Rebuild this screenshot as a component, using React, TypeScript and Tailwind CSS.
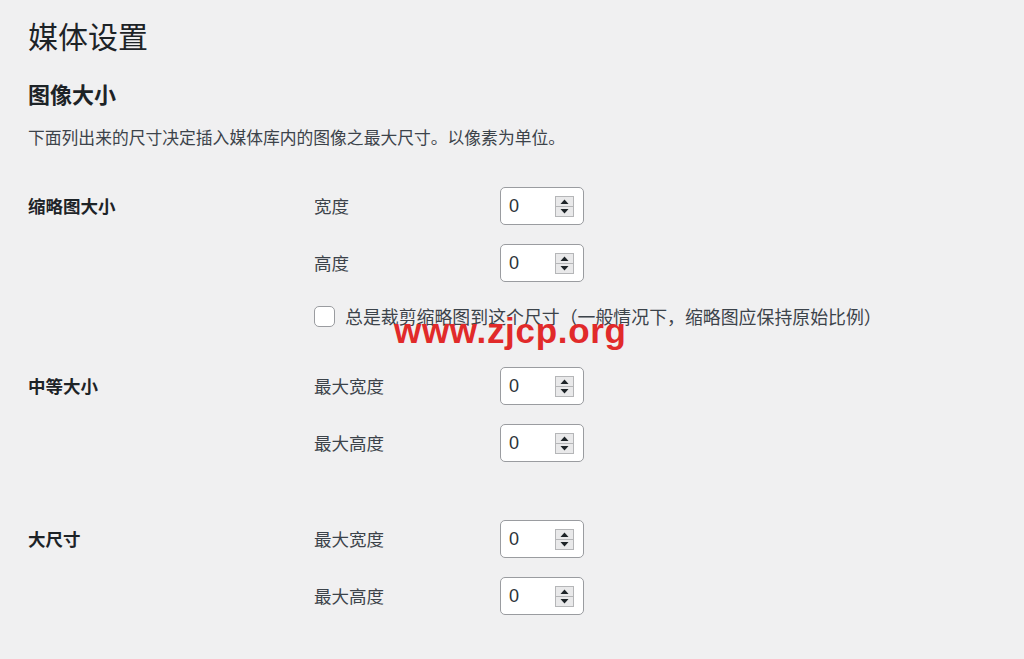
import React from 'react';

const FONT = '"Noto Sans CJK SC", "Liberation Sans", sans-serif';

const Spinner: React.FC = () => (
    <svg width="19" height="21" viewBox="0 0 19 21" className="shrink-0">
        <rect x="0.5" y="0.5" width="18" height="20" fill="#e9e9ea" stroke="#b5b6b8" />
        <line x1="1" y1="10.5" x2="18" y2="10.5" stroke="#b5b6b8" />
        <path d="M9.5 3.5 L13.5 8 L5.5 8 Z" fill="#1d2327" />
        <path d="M9.5 17.5 L13.5 13 L5.5 13 Z" fill="#1d2327" />
    </svg>
);

const NumberBox: React.FC<{ value: string }> = ({ value }) => (
    <div className="w-[84px] h-[38px] bg-white border border-[#9a9ca0] rounded-[5px] flex items-center pl-[8px] pr-[9px] justify-between">
        <span className="text-[18px] text-[#2c3338]" style={{ fontFamily: '"Liberation Sans", sans-serif' }}>{value}</span>
        <Spinner />
    </div>
);

const FieldRow: React.FC<{ label: string; className?: string }> = ({ label, className }) => (
    <div className={`flex items-center h-[38px] ${className ?? ''}`}>
        <span className="w-[186px] text-[17.5px] text-[#3c434a]">{label}</span>
        <NumberBox value="0" />
    </div>
);

const Section: React.FC<{ title: string; className?: string; children: React.ReactNode }> = ({ title, className, children }) => (
    <div className={`flex ${className ?? ''}`}>
        <div className="w-[286px] h-[38px] flex items-center text-[17.5px] font-bold text-[#1d2327]">{title}</div>
        <div className="flex flex-col">{children}</div>
    </div>
);

export default function App() {
    return (
        <div className="relative w-[1024px] h-[659px] overflow-hidden bg-[#f0f0f1] px-[28px]" style={{ fontFamily: FONT }}>
            <h1 className="pt-[15px] text-[30px] leading-[40px] font-normal text-[#1d2327]">媒体设置</h1>
            <h2 className="mt-[23px] text-[22px] leading-[30px] font-bold text-[#1d2327]">图像大小</h2>
            <p className="mt-[16px] text-[16.8px] leading-[26px] text-[#3c434a]">
                下面列出来的尺寸决定插入媒体库内的图像之最大尺寸。以像素为单位。
            </p>

            <Section title="缩略图大小" className="mt-[37px]">
                <FieldRow label="宽度" />
                <FieldRow label="高度" className="mt-[19px]" />
                <label className="mt-[24px] flex items-center h-[21px] gap-[10px]">
                    <span className="w-[21px] h-[21px] bg-white border border-[#9a9ca0] rounded-[5px]" />
                    <span className="text-[17.9px] text-[#3c434a]">总是裁剪缩略图到这个尺寸（一般情况下，缩略图应保持原始比例）</span>
                </label>
            </Section>

            <Section title="中等大小" className="mt-[40px]">
                <FieldRow label="最大宽度" />
                <FieldRow label="最大高度" className="mt-[19px]" />
            </Section>

            <Section title="大尺寸" className="mt-[58px]">
                <FieldRow label="最大宽度" />
                <FieldRow label="最大高度" className="mt-[19px]" />
            </Section>

            {/* watermark */}
            <div
                className="absolute left-[394px] top-[309px] text-[35px] font-bold text-[#e12a2a] tracking-[0.7px] leading-[44px]"
                style={{ fontFamily: '"Liberation Sans", Arial, sans-serif' }}
            >
                www.zjcp.org
            </div>
        </div>
    );
}
